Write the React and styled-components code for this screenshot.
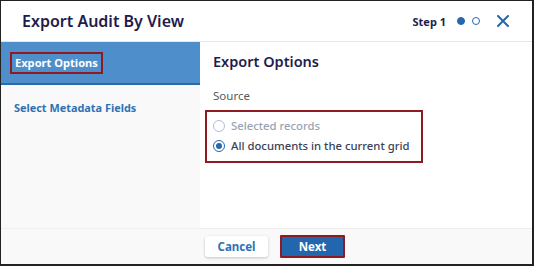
import React from "react";
import styled, { createGlobalStyle } from "styled-components";

const Global = createGlobalStyle`
  html, body { margin: 0; padding: 0; background: #fff; }
  body { font-family: "Noto Sans", "Open Sans", sans-serif; }
  * { box-sizing: border-box; }
`;

const Frame = styled.div`
  width: 534px;
  height: 266px;
  border-style: solid;
  border-color: #222;
  border-width: 1px 2px 2px 1px;
  display: flex;
  flex-direction: column;
  background: #fff;
  overflow: hidden;
`;

const Header = styled.div`
  height: 41px;
  flex: none;
  display: flex;
  align-items: center;
  padding: 0 22px 0 21px;
  border-bottom: 1px solid #e3e7ec;
`;

const Title = styled.div`
  flex: 1;
  font-size: 16px;
  font-weight: 600;
  color: #1f1c4d;
`;

const StepLabel = styled.span`
  font-size: 11px;
  font-weight: 700;
  color: #1f1c4d;
  margin-right: 11px;
`;

const Dot = styled.span`
  width: 8px;
  height: 8px;
  border-radius: 50%;
  margin-right: 7px;
  background: ${(p) => (p.$filled ? "#2467ad" : "#fff")};
  border: 1.5px solid #2467ad;
  display: inline-block;
`;

const Close = styled.button`
  background: none;
  border: none;
  padding: 0;
  margin-left: 9px;
  width: 14px;
  height: 14px;
  display: flex;
  align-items: center;
  justify-content: center;
  cursor: pointer;
`;

const Body = styled.div`
  flex: 1;
  display: flex;
  min-height: 0;
`;

const Sidebar = styled.div`
  width: 199px;
  background: #f9f9f9;
  display: flex;
  flex-direction: column;
`;

const NavItem = styled.div`
  height: ${(p) => (p.$active ? "43px" : "auto")};
  display: flex;
  align-items: center;
  padding: ${(p) => (p.$active ? "0 0 0 9px" : "15px 0 0 13px")};
  background: ${(p) => (p.$active ? "#4d8ecb" : "transparent")};
  border-bottom: ${(p) => (p.$active ? "2px solid #2a6aa8" : "none")};
  font-size: ${(p) => (p.$active ? "11.1px" : "10.9px")};
  font-weight: 700;
  white-space: nowrap;
  color: ${(p) => (p.$active ? "#fff" : "#2e72b4")};
`;

const Highlight = styled.span`
  display: inline-block;
  padding: 2px 3px;
  border: 2px solid #8f1b22;
  line-height: 14px;
`;

const Main = styled.div`
  flex: 1;
  background: #fff;
  padding: 9px 0 0 13px;
  display: flex;
  flex-direction: column;
`;

const Heading = styled.div`
  font-size: 14.5px;
  font-weight: 600;
  color: #1f1c4d;
  line-height: 20px;
`;

const Label = styled.div`
  margin-top: 17px;
  font-size: 11.5px;
  color: #5a5a5a;
  line-height: 16px;
`;

const RadioGroup = styled.div`
  margin: 6px 0 0 -8px;
  width: 218px;
  height: 53px;
  border: 2px solid #8f1b22;
  padding: 6px 0 0 6px;
  display: flex;
  flex-direction: column;
  gap: 4px;
`;

const RadioRow = styled.label`
  display: flex;
  align-items: center;
  gap: 6px;
  font-size: 11.3px;
  font-weight: 500;
  line-height: 16px;
  white-space: nowrap;
  color: ${(p) => (p.$disabled ? "#9aa3b5" : "#3a4257")};
`;

const Circle = styled.span`
  width: 12px;
  height: 12px;
  border-radius: 50%;
  border: 1.3px solid ${(p) => (p.$disabled ? "#a9c1dc" : "#2467ad")};
  display: flex;
  align-items: center;
  justify-content: center;
  background: #fff;
  &::after {
    content: "";
    width: 6px;
    height: 6px;
    border-radius: 50%;
    background: ${(p) => (p.$checked ? "#2467ad" : "transparent")};
  }
`;

const Footer = styled.div`
  height: 36px;
  flex: none;
  background: #f9f9f9;
  border-top: 1px solid #eeeeee;
  display: flex;
  align-items: center;
  padding-left: 204px;
  gap: 12px;
`;

const Button = styled.button`
  height: ${(p) => (p.$primary ? "23px" : "21px")};
  width: ${(p) => (p.$primary ? "65px" : "63px")};
  font-family: inherit;
  font-size: 11.5px;
  font-weight: 700;
  cursor: pointer;
  color: ${(p) => (p.$primary ? "#fff" : "#2e72b4")};
  background: ${(p) => (p.$primary ? "#2267ad" : "#fff")};
  border: ${(p) => (p.$primary ? "2px solid #8f1b22" : "none")};
  box-shadow: ${(p) => (p.$primary ? "none" : "0 1px 3px rgba(0,0,0,0.22)")};
  border-radius: ${(p) => (p.$primary ? "1px" : "3px")};
  padding: 0;
`;

export default function App() {
  return (
    <>
      <Global />
      <Frame>
        <Header>
          <Title>Export Audit By View</Title>
          <StepLabel>Step 1</StepLabel>
          <Dot $filled />
          <Dot />
          <Close aria-label="Close">
            <svg width="12" height="12" viewBox="0 0 12 12">
              <path d="M1 1 L11 11 M11 1 L1 11" stroke="#2467ad" strokeWidth="2" strokeLinecap="round" />
            </svg>
          </Close>
        </Header>
        <Body>
          <Sidebar>
            <NavItem $active>
              <Highlight>Export Options</Highlight>
            </NavItem>
            <NavItem>Select Metadata Fields</NavItem>
          </Sidebar>
          <Main>
            <Heading>Export Options</Heading>
            <Label>Source</Label>
            <RadioGroup>
              <RadioRow $disabled>
                <Circle $disabled />
                Selected records
              </RadioRow>
              <RadioRow>
                <Circle $checked />
                All documents in the current grid
              </RadioRow>
            </RadioGroup>
          </Main>
        </Body>
        <Footer>
          <Button>Cancel</Button>
          <Button $primary>Next</Button>
        </Footer>
      </Frame>
    </>
  );
}
